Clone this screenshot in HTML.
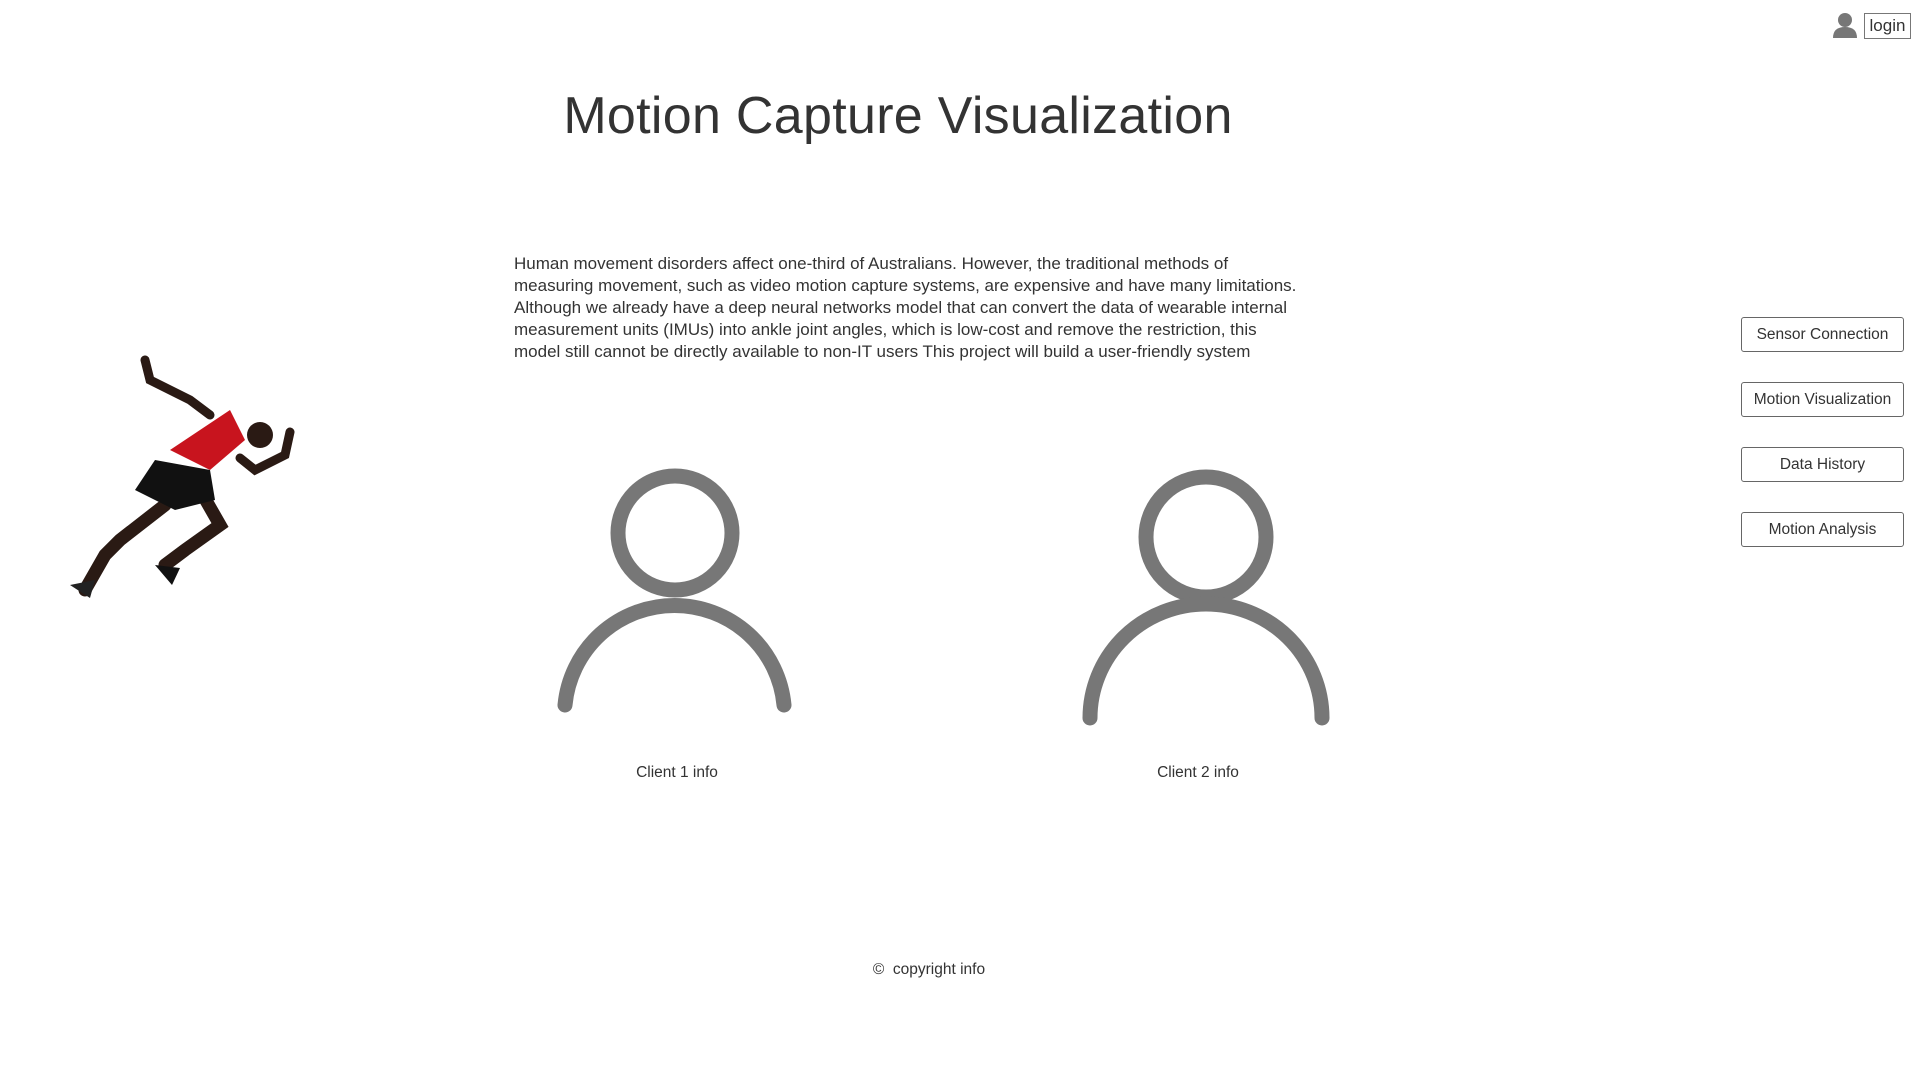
<!DOCTYPE html>
<html><head><meta charset="utf-8"><style>
body{margin:0;width:1920px;height:1080px;background:#fff;font-family:"Liberation Sans",sans-serif;color:#333;position:relative;overflow:hidden}
.a{position:absolute}
h1{position:absolute;left:0;width:1796px;text-align:center;top:86px;margin:0;font-weight:normal;font-size:52px;color:#333;letter-spacing:0.3px}
p{position:absolute;left:514px;top:253px;width:790px;margin:0;font-size:17px;line-height:22px;color:#333}
.btn{position:absolute;left:1741px;width:161px;height:33px;border:1px solid #666;border-radius:3px;font-size:15.5px;line-height:33px;text-align:center;color:#333}
.lbl{position:absolute;font-size:15.5px;width:200px;text-align:center}
</style></head><body>
<svg class="a" style="left:1830px;top:10px" width="30" height="30" viewBox="0 0 30 30"><circle cx="15" cy="10" r="7" fill="#777"/><path d="M3 28 Q3 17 15 17 Q27 17 27 28Z" fill="#777"/></svg>
<div class="a" style="left:1864px;top:13px;width:45px;height:24px;border:1px solid #777;font-size:17px;line-height:23px;text-align:center">login</div>
<h1>Motion Capture Visualization</h1>
<p>Human movement disorders affect one-third of Australians. However, the traditional methods of measuring movement, such as video motion capture systems, are expensive and have many limitations. Although we already have a deep neural networks model that can convert the data of wearable internal measurement units (IMUs) into ankle joint angles, which is low-cost and remove the restriction, this model still cannot be directly available to non-IT users This project will build a user-friendly system</p>
<svg class="a" style="left:40px;top:340px" width="280" height="260" viewBox="0 0 280 260">
<g stroke="#2a1a14" stroke-linecap="round" fill="none">
<path d="M105 20 L110 40 L150 60 L170 75" stroke-width="9"/>
<path d="M250 92 L245 115 L215 130 L200 118" stroke-width="9"/>
<path d="M160 150 L180 185 L145 210 L125 225" stroke-width="13"/>
<path d="M125 165 L80 200 L65 215 L45 250" stroke-width="13"/>
</g>
<path d="M130 110 L190 70 L205 100 L170 130 Z" fill="#c8141e"/>
<circle cx="220" cy="95" r="13" fill="#2a1a14"/>
<path d="M115 120 L170 130 L175 160 L135 170 L95 150Z" fill="#111"/>
<path d="M115 225 L140 228 L132 245Z" fill="#111"/>
<path d="M30 245 L55 240 L50 258Z" fill="#222"/>
</svg>
<svg class="a" style="left:540px;top:450px" width="820" height="300" viewBox="540 450 820 300" fill="none" stroke="#777" stroke-linecap="round">
<circle cx="675" cy="533" r="57" stroke-width="15"/>
<path d="M565 705 A110 110 0 0 1 784 705" stroke-width="15"/>
<circle cx="1206" cy="537" r="60" stroke-width="15"/>
<path d="M1090 718 A116 114 0 0 1 1322 718" stroke-width="15"/>
</svg>
<div class="lbl" style="left:577px;top:764px">Client 1 info</div>
<div class="lbl" style="left:1098px;top:764px">Client 2 info</div>
<div class="btn" style="top:317px">Sensor Connection</div>
<div class="btn" style="top:382px">Motion Visualization</div>
<div class="btn" style="top:447px">Data History</div>
<div class="btn" style="top:512px">Motion Analysis</div>
<div class="lbl" style="left:829px;top:961px">©&nbsp; copyright info</div>
</body></html>
